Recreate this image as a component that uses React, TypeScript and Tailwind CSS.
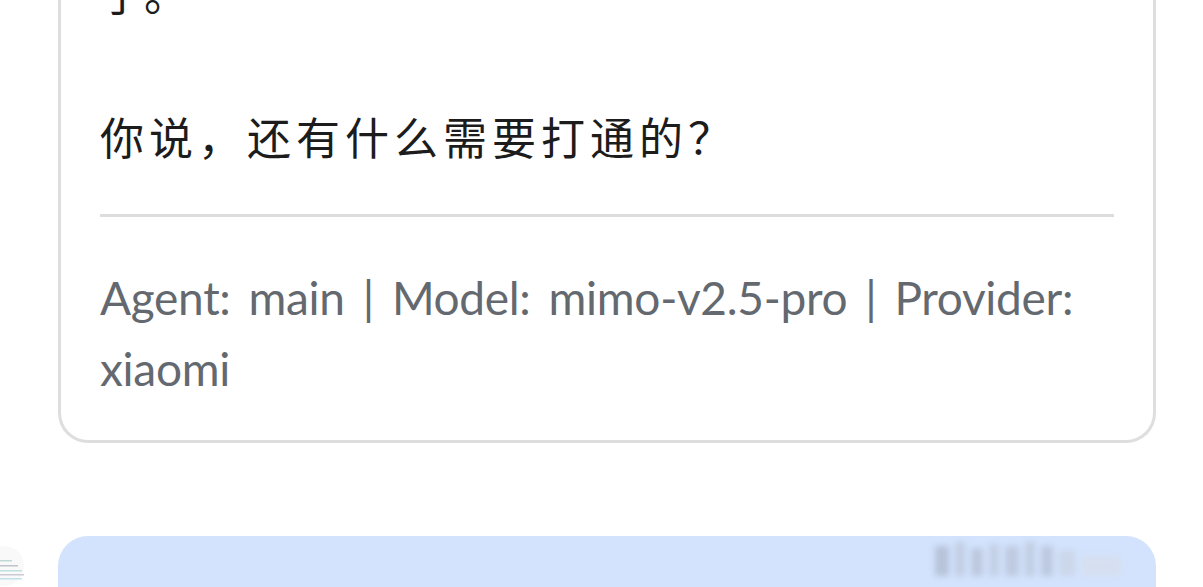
import React from 'react'

const cjk = { fontFamily: '"Noto Sans CJK SC", "Noto Sans", sans-serif' }
const latin = { fontFamily: 'Lato, "Open Sans", sans-serif' }

function MessageCard() {
    return (
        <div className="ml-[58px] mr-[47px] -mt-[43px] border-[3px] border-t-0 border-[#dedede] rounded-b-[30px] bg-white px-[39px] pb-[36px]">
            <p style={cjk} className="text-[44px] leading-[70px] text-[#1c1c1c]">了。</p>
            <p style={cjk} className="mt-[74px] text-[44px] leading-[70px] tracking-[5px] text-[#1c1c1c]">你说，还有什么需要打通的？</p>
            <div className="mt-[43px] h-[3px] bg-[#dddddd]" />
            <p style={latin} className="mt-[45px] text-[46px] leading-[71px] tracking-[-0.3px] [word-spacing:6.5px] text-[#646970]">
                Agent: main | Model: mimo-v2.5-pro | Provider: xiaomi
            </p>
        </div>
    )
}

function Avatar() {
    return (
        <div className="w-[26px] shrink-0 pt-[6px] opacity-60">
            <svg width="26" height="46" viewBox="0 0 26 46">
                <circle cx="4" cy="24" r="20" fill="#f4f6f5" />
                <rect x="0" y="18" width="12" height="1.5" fill="#9bb" />
                <rect x="0" y="23" width="18" height="1.5" fill="#99a" />
                <rect x="0" y="28" width="22" height="1.5" fill="#9cc" />
                <rect x="0" y="32" width="24" height="1.5" fill="#aab" />
                <rect x="0" y="36" width="22" height="1.5" fill="#9cd" />
            </svg>
        </div>
    )
}

export default function App() {
    return (
        <div className="relative h-[587px] overflow-hidden bg-white">
            <MessageCard />
            <div className="mt-[93px] flex gap-[32px] mr-[47px]">
                <Avatar />
                <div className="h-[120px] flex-1 rounded-t-[30px] bg-[#d3e3fd]" />
            </div>
            <div className="absolute left-[935px] top-[538px] flex h-[38px] w-[250px] items-end gap-[6px] blur-[3px] opacity-50">
                <div className="h-[30px] w-[14px] bg-[#9aa3b5]" />
                <div className="h-[34px] w-[10px] bg-[#b0b8c8]" />
                <div className="h-[28px] w-[12px] bg-[#a6aebf]" />
                <div className="h-[32px] w-[10px] bg-[#b3bbcb]" />
                <div className="h-[30px] w-[14px] bg-[#aab2c2]" />
                <div className="h-[34px] w-[10px] bg-[#b0b8c8]" />
                <div className="h-[30px] w-[12px] bg-[#a6aebf]" />
                <div className="h-[26px] w-[16px] bg-[#c4cad6]" />
                <div className="h-[20px] w-[40px] bg-[#d8dce4]" />
            </div>
        </div>
    )
}
